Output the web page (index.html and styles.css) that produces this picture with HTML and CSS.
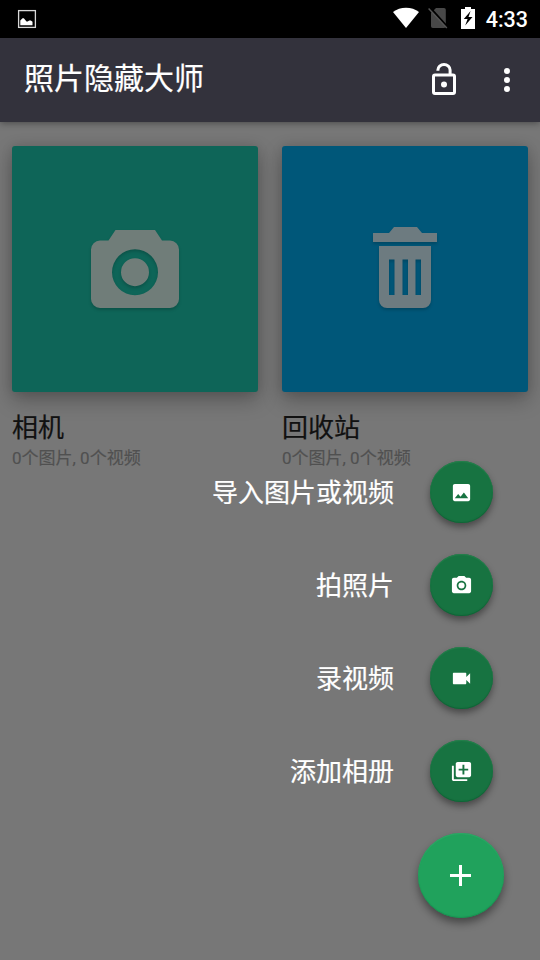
FILE: index.html
```html
<!DOCTYPE html>
<html lang="zh-CN">
<head>
<meta charset="utf-8">
<title>照片隐藏大师</title>
<link rel="stylesheet" href="styles.css">
</head>
<body>
<div class="status">
  <svg class="status-picture" width="20" height="20" viewBox="0 0 20 20"><rect x="1.6" y="1.6" width="16.8" height="16.8" fill="none" stroke="#d8d8d8" stroke-width="1.3"/><path d="M3.3 16.2V11.5l2.2-2.2h1.3l2.700 3.200h1.200l1.500-1h1.600l1.700 1.300v3.400z" fill="#fff"/></svg>
  <svg class="status-wifi" width="28" height="22" viewBox="0 0 28 22"><path d="M1 5C8-.8 20-.8 27 5L14 21z" fill="#fff"/></svg>
  <svg class="status-sim" width="20" height="22" viewBox="0 0 20 22"><path d="M8 1h8a1.800 1.800 0 0 1 1.800 1.800v16.400A1.800 1.800 0 0 1 16 21H4.800a1.800 1.800 0 0 1-1.800-1.800V6z" fill="#484848"/><path d="M1.600 0L20 20.500" stroke="#000" stroke-width="2"/><path d="M.6 1.500L18.800 21" stroke="#555" stroke-width="1.500"/></svg>
  <svg class="status-battery" width="14" height="22" viewBox="0 0 14 22"><path d="M4 0h6v2h4v20H0V2h4z" fill="#fff"/><path d="M9.600 4L2.800 12h3.800L4.200 18.500l7.300-8.500H7.500z" fill="#000"/></svg>
  <span class="clock">4:33</span>
</div>
<header class="toolbar">
  <h1>照片隐藏大师</h1>
  <svg class="lock" width="24" height="32" viewBox="0 0 24 32"><path d="M5.900 7.800V7a6.100 5.500 0 0 1 12.200 0v5" fill="none" stroke="#fff" stroke-width="3"/><rect x="1.500" y="12" width="21" height="18.500" rx="1.500" fill="none" stroke="#fff" stroke-width="3"/><circle cx="12" cy="21.500" r="3" fill="#fff"/></svg>
  <svg class="more" width="6" height="24" viewBox="0 0 6 24"><g fill="#fff"><circle cx="3" cy="3" r="3"/><circle cx="3" cy="12" r="3"/><circle cx="3" cy="21" r="3"/></g></svg>
</header>
<main class="albums">
  <article class="album">
    <div class="cover camera">
      <svg width="88" height="78" viewBox="0 0 88 78"><path fill-rule="evenodd" d="M24.500 0h39.500l7 10.500h8a9 9 0 0 1 9 9V69a9 9 0 0 1-9 9H9a9 9 0 0 1-9-9V19.500a9 9 0 0 1 9-9h8.500zM44 19.200a23 23 0 1 0 0 46 23 23 0 1 0 0-46zM44 28.200a14 14 0 1 1 0 28 14 14 0 1 1 0-28z"/></svg>
    </div>
    <h2>相机</h2>
    <p>0个图片, 0个视频</p>
  </article>
  <article class="album">
    <div class="cover trash">
      <svg width="64" height="81" viewBox="0 0 64 81"><path fill-rule="evenodd" d="M0 6h16l5-6h23l5 6h15v9H0zM6 19h52v54a8 8 0 0 1-8 8H14a8 8 0 0 1-8-8zM16 32.500V68h5.500V32.500zM29.500 32.500V68H35V32.500zM42.500 32.500V68H48V32.500z"/></svg>
    </div>
    <h2>回收站</h2>
    <p>0个图片, 0个视频</p>
  </article>
</main>
<nav class="actions">
  <div class="action"><span>导入图片或视频</span><button class="mini"><svg width="23" height="23" viewBox="0 0 24 24"><path d="M21 19V5c0-1.100-.9-2-2-2H5c-1.100 0-2 .9-2 2v14c0 1.100.9 2 2 2h14c1.100 0 2-.9 2-2zM8.500 13.500l2.500 3.010L14.500 12l4.500 6H5l3.500-4.500z"/></svg></button></div>
  <div class="action"><span>拍照片</span><button class="mini"><svg width="23" height="23" viewBox="0 0 24 24"><circle cx="12" cy="12" r="3.200"/><path d="M9 2L7.170 4H4c-1.100 0-2 .9-2 2v12c0 1.100.9 2 2 2h16c1.100 0 2-.9 2-2V6c0-1.100-.9-2-2-2h-3.170L15 2H9zm3 15c-2.760 0-5-2.240-5-5s2.240-5 5-5 5 2.240 5 5-2.240 5-5 5z"/></svg></button></div>
  <div class="action"><span>录视频</span><button class="mini"><svg width="23" height="23" viewBox="0 0 24 24"><path d="M17 10.500V7c0-.55-.45-1-1-1H4c-.55 0-1 .45-1 1v10c0 .55.45 1 1 1h12c.55 0 1-.45 1-1v-3.500l4 4v-11l-4 4z"/></svg></button></div>
  <div class="action"><span>添加相册</span><button class="mini"><svg width="23" height="23" viewBox="0 0 24 24"><path d="M4 6H2v14c0 1.100.9 2 2 2h14v-2H4V6zm16-4H8c-1.100 0-2 .9-2 2v12c0 1.100.9 2 2 2h12c1.100 0 2-.9 2-2V4c0-1.100-.9-2-2-2zm-1 9h-4v4h-2v-4H9V9h4V5h2v4h4v2z"/></svg></button></div>
  <button class="fab"><svg width="21" height="21" viewBox="0 0 21 21"><path d="M9 0h3v9h9v3h-9v9H9v-9H0V9h9z"/></svg></button>
</nav>
</body>
</html>
```
FILE: styles.css
```css
* {
  box-sizing: border-box;
}

body {
  margin: 0;
  width: 540px;
  height: 960px;
  position: relative;
  overflow: hidden;
  background: #777;
  font-family: Roboto, "Noto Sans CJK SC", sans-serif;
}

h1, h2, p {
  margin: 0;
  font-weight: 400;
}

h1, h2, .action span {
  -webkit-text-stroke: .2px currentColor;
}

svg {
  display: block;
  flex: none;
}

.status {
  display: flex;
  align-items: center;
  height: 38px;
  padding: 0 12px 2px 17px;
  background: #000;
}

.status-picture {
  margin-top: 2px;
}

.status-wifi {
  margin-left: auto;
}

.status-sim {
  margin-left: 8px;
}

.status-battery {
  margin-left: 13px;
}

.clock {
  margin: 4px 0 0 11px;
  color: #fff;
  font-size: 21.500px;
  font-weight: 500;
  line-height: 26px;
}

.toolbar {
  position: relative;
  display: flex;
  align-items: center;
  height: 84px;
  padding: 0 30px 0 24px;
  background: #33323c;
  color: #fff;
  box-shadow: 0 1px 7px rgba(0, 0, 0, .4);
}

.toolbar h1 {
  flex: 1;
  font-size: 30px;
  line-height: 40px;
  margin-top: -2px;
}

.lock {
  margin: -2px 48px 0 0;
}

.albums {
  display: grid;
  grid-template-columns: 246px 246px;
  gap: 24px;
  padding: 24px 12px;
}

.cover {
  display: flex;
  align-items: center;
  justify-content: center;
  height: 246px;
  border-radius: 3px;
  box-shadow: 0 8px 20px rgba(0, 0, 0, .27), 0 0 12px rgba(0, 0, 0, .1);
}

.cover svg {
  filter: drop-shadow(0 2px 1.500px rgba(0, 0, 0, .18));
}

.camera {
  background: #0e6558;
  fill: #707d79;
}

.cover.camera svg {
  margin-top: -1px;
}

.trash {
  background: #005779;
  fill: #6d7b80;
}

.cover.trash svg {
  margin-top: -3px;
}

.album h2 {
  margin-top: 18px;
  color: #111;
  font-size: 26px;
  line-height: 36px;
}

.album p {
  color: #505050;
  font-size: 17px;
  line-height: 24px;
  -webkit-text-stroke: .15px currentColor;
}

.actions {
  position: absolute;
  right: 36px;
  bottom: 42px;
  display: flex;
  flex-direction: column;
  align-items: flex-end;
  gap: 31px;
}

.action {
  display: flex;
  align-items: center;
  gap: 36px;
  padding-right: 11px;
  height: 62px;
  color: #fff;
  font-size: 26px;
}

.action span {
  margin-top: -3px;
}

button {
  display: flex;
  align-items: center;
  justify-content: center;
  border: 0;
  padding: 0;
  border-radius: 50%;
  fill: #fff;
}

.mini {
  width: 63px;
  height: 62px;
  background: #177341;
  box-shadow: 0 4px 7px rgba(0, 0, 0, .4), inset 0 1px 1px #25804c, inset 0 -1px 1px #106336;
}

.fab {
  width: 86px;
  height: 85px;
  padding-right: 2px;
  background: #20a25c;
  box-shadow: 0 5px 9px rgba(0, 0, 0, .42), inset 0 1px 1px #2daa67, inset 0 -1px 1px #199251;
}
```
